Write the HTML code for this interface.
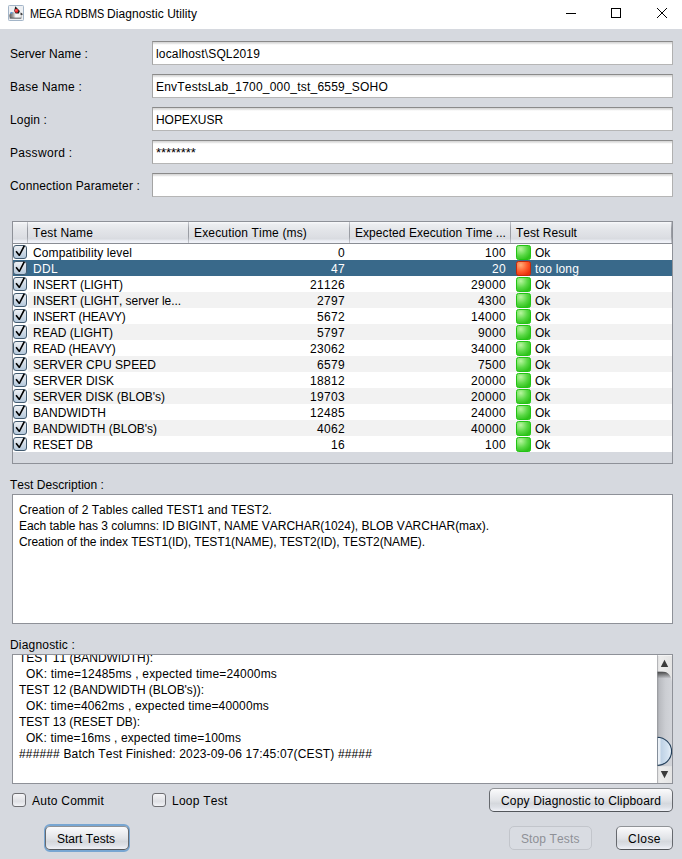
<!DOCTYPE html>
<html><head><meta charset="utf-8">
<style>
*{margin:0;padding:0;box-sizing:border-box}
html,body{width:682px;height:859px;overflow:hidden;background:#d6d9df;font-family:"Liberation Sans",sans-serif;font-size:12px;color:#000;font-kerning:none}
.a{position:absolute}
.t{position:absolute;line-height:16px;white-space:pre;height:16px}
#title{left:0;top:0;width:682px;height:29px;background:#fff}
.tf{position:absolute;left:152px;width:521px;height:24px;background:#fff;border:1px solid #a9a9a9;border-color:#8a8a8a #b0b0b0 #b6b6b6 #a4a4a4;background:linear-gradient(#d9d9d9 0px,#d9d9d9 1px,#f2f2f2 2px,#fff 3px)}
.r{text-align:right}
.hdr{background:linear-gradient(#f6f7f9 0px,#f6f7f9 1px,#eceef1 2px,#e3e5e9 8px,#dcdee3 15px,#d8dbe0 17px,#e6e8ee 18px,#f0f2f8 20px,#f0f2f8 21px)}
.hdiv{width:1px;height:21px;background:linear-gradient(#c8cad0,#9a9da4 30%,#9a9da4 70%,#c8cad0)}
</style></head><body>
<svg width="0" height="0" style="position:absolute">
 <defs>
  <linearGradient id="cbg" x1="0" y1="0" x2="0" y2="1"><stop offset="0" stop-color="#f1f3f6"/><stop offset="0.4" stop-color="#d8e0e9"/><stop offset="1" stop-color="#b2c7db"/></linearGradient>
  <radialGradient id="gg" cx="0.3" cy="0.25" r="0.8"><stop offset="0" stop-color="#b8f5a0"/><stop offset="0.6" stop-color="#5ad845"/><stop offset="1" stop-color="#2fc21c"/></radialGradient>
  <radialGradient id="rg" cx="0.3" cy="0.25" r="0.8"><stop offset="0" stop-color="#ffae7a"/><stop offset="0.6" stop-color="#ff5a2a"/><stop offset="1" stop-color="#e8300c"/></radialGradient>
  <symbol id="chk" viewBox="0 0 14 14">
   <rect x="0.5" y="0.5" width="13" height="13" rx="2.5" fill="url(#cbg)" stroke="#435b70"/>
   <path d="M2.4 6.7 L3.7 5.7 L6.2 8.9 L10.5 0.6 L12.1 1.0 L6.9 10.9 L5.8 10.9 Z" fill="#000"/>
  </symbol>
  <symbol id="grn" viewBox="0 0 15 15"><rect x="0.5" y="0.5" width="14" height="14" rx="2" fill="url(#gg)" stroke="#22c414"/></symbol>
  <symbol id="red" viewBox="0 0 15 15"><rect x="0.5" y="0.5" width="14" height="14" rx="2" fill="url(#rg)" stroke="#c42a0a"/></symbol>
 </defs>
</svg>
<div id="title" class="a">
  <svg class="a" style="left:8px;top:5px" width="16" height="16" viewBox="0 0 16 16">
    <defs><linearGradient id="dk" x1="0" x2="1" y1="0" y2="0"><stop offset="0" stop-color="#5a5a5a"/><stop offset="0.3" stop-color="#a8a8a8"/><stop offset="0.5" stop-color="#fafafa"/><stop offset="0.85" stop-color="#ececec"/><stop offset="1" stop-color="#b0b0b0"/></linearGradient></defs>
    <rect x="0.5" y="0.5" width="15" height="15" rx="0.8" fill="#eef0f3" stroke="#a3b5c8"/>
    <path d="M1.4 10 Q1.8 7.4 4.4 7.2 L11 7.2 Q13.8 7.6 14.2 10 L13.4 13 L2 13 Q1.2 12 1.4 10 Z" fill="url(#dk)"/>
    <path d="M1.6 12.4 L13.6 12.4 L13.2 14 L1.8 14 Z" fill="#4a4b4e" opacity="0.6"/>
    <ellipse cx="3.4" cy="7.8" rx="1.2" ry="0.9" fill="#5b9bd8"/>
    <path d="M12.5 7.6 Q14.8 8 14.6 10 L12.6 10 Z" fill="#262626" opacity="0.85"/>
    <path d="M7.3 1.2 L11.9 5.9 L10.8 8.6 L7.6 8.6 L6.2 5.8 Z" fill="#18201f"/>
    <circle cx="8.5" cy="5.75" r="1.9" fill="#e9282c"/>
    <circle cx="8" cy="5.2" r="0.7" fill="#ff8c8c"/>
  </svg>
  <div class="t" style="left:30px;top:6px;font-size:12px;transform:scaleX(0.905);transform-origin:0 0;letter-spacing:0px">MEGA RDBMS</div><div class="t" style="left:107px;top:6px;font-size:12px;letter-spacing:0.07px">Diagnostic Utility</div>
  <div class="a" style="left:566px;top:13px;width:10px;height:1px;background:#000"></div>
  <div class="a" style="left:611px;top:8px;width:10px;height:10px;border:1px solid #000"></div>
  <svg class="a" style="left:656px;top:7px" width="12" height="12" viewBox="0 0 12 12"><path d="M1 1 L11 11 M11 1 L1 11" stroke="#000" stroke-width="1"/></svg>
</div>

<div class="t" style="left:10px;top:46px;letter-spacing:0.050px">Server Name :</div>
<div class="t" style="left:10px;top:79px;letter-spacing:0.240px">Base Name :</div>
<div class="t" style="left:10px;top:112px;letter-spacing:0.139px">Login :</div>
<div class="t" style="left:10px;top:145px;letter-spacing:0.314px">Password :</div>
<div class="t" style="left:10px;top:178px;letter-spacing:0.149px">Connection Parameter :</div>

<div class="tf" style="top:41px"></div>
<div class="tf" style="top:74px"></div>
<div class="tf" style="top:107px"></div>
<div class="tf" style="top:140px"></div>
<div class="tf" style="top:173px"></div>
<div class="t" style="left:156px;top:46px;letter-spacing:0.153px">localhost\SQL2019</div>
<div class="t" style="left:156px;top:79px;letter-spacing:0.211px">EnvTestsLab_1700_000_tst_6559_SOHO</div>
<div class="t" style="left:156px;top:112px;letter-spacing:-0.043px">HOPEXUSR</div>
<div class="t" style="left:156px;top:145px;font-size:13px;letter-spacing:-0.1px">********</div>

<!-- TABLE -->
<div class="a" style="left:12px;top:221px;width:661px;height:243px;border:1px solid #8e9198;background:#d6d9df"></div>
<div class="a hdr" style="left:13px;top:222px;width:659px;height:21px"></div>
<div class="a" style="left:13px;top:243px;width:659px;height:1px;background:#8a8d94"></div>
<div class="a hdiv" style="left:27px;top:222px"></div>
<div class="a hdiv" style="left:188px;top:222px"></div>
<div class="a hdiv" style="left:349px;top:222px"></div>
<div class="a hdiv" style="left:510px;top:222px"></div>
<div class="a hdiv" style="left:671px;top:222px"></div>
<div class="t" style="left:33px;top:225px;letter-spacing:0.145px">Test Name</div>
<div class="t" style="left:194px;top:225px;letter-spacing:0.157px">Execution Time (ms)</div>
<div class="t" style="left:355px;top:225px;letter-spacing:0.059px">Expected Execution Time ...</div>
<div class="t" style="left:516px;top:225px;letter-spacing:0.027px">Test Result</div>
<div class="a" style="left:13px;top:244px;width:15px;height:16px;background:#fff"></div>
<div class="a" style="left:28px;top:244px;width:644px;height:16px;background:#fff"></div>
<svg class="a cb" style="left:13px;top:245px" width="14" height="14" viewBox="0 0 14 14"><rect x="0.5" y="0.5" width="13" height="13" rx="2.5" fill="url(#cbg)" stroke="#435b70"/><path d="M2.4 6.7 L3.7 5.7 L6.2 8.9 L10.5 0.6 L12.1 1.0 L6.9 10.9 L5.8 10.9 Z" fill="#000"/></svg>
<div class="t" style="left:33px;top:245px;;letter-spacing:0.121px">Compatibility level</div>
<div class="t r" style="left:189px;width:156px;top:245px;;letter-spacing:0.326px">0</div>
<div class="t r" style="left:350px;width:156px;top:245px;;letter-spacing:0.326px">100</div>
<svg class="a" style="left:516px;top:245px" width="15" height="15" viewBox="0 0 15 15"><rect x="0.5" y="0.5" width="14" height="14" rx="2" fill="url(#gg)" stroke="#22c414"/></svg>
<div class="t" style="left:535px;top:245px;;letter-spacing:-0.167px">Ok</div>
<div class="a" style="left:13px;top:260px;width:659px;height:16px;background:#39698a"></div>
<svg class="a cb" style="left:13px;top:261px" width="14" height="14" viewBox="0 0 14 14"><rect x="0.5" y="0.5" width="13" height="13" rx="2.5" fill="url(#cbg)" stroke="#435b70"/><path d="M2.4 6.7 L3.7 5.7 L6.2 8.9 L10.5 0.6 L12.1 1.0 L6.9 10.9 L5.8 10.9 Z" fill="#000"/></svg>
<div class="t" style="left:33px;top:261px;color:#fff;;letter-spacing:0.331px">DDL</div>
<div class="t r" style="left:189px;width:156px;top:261px;color:#fff;;letter-spacing:0.326px">47</div>
<div class="t r" style="left:350px;width:156px;top:261px;color:#fff;;letter-spacing:0.326px">20</div>
<svg class="a" style="left:516px;top:261px" width="15" height="15" viewBox="0 0 15 15"><rect x="0.5" y="0.5" width="14" height="14" rx="2" fill="url(#rg)" stroke="#c42a0a"/></svg>
<div class="t" style="left:535px;top:261px;color:#fff;;letter-spacing:0.162px">too long</div>
<div class="a" style="left:13px;top:276px;width:15px;height:16px;background:#fff"></div>
<div class="a" style="left:28px;top:276px;width:644px;height:16px;background:#fff"></div>
<svg class="a cb" style="left:13px;top:277px" width="14" height="14" viewBox="0 0 14 14"><rect x="0.5" y="0.5" width="13" height="13" rx="2.5" fill="url(#cbg)" stroke="#435b70"/><path d="M2.4 6.7 L3.7 5.7 L6.2 8.9 L10.5 0.6 L12.1 1.0 L6.9 10.9 L5.8 10.9 Z" fill="#000"/></svg>
<div class="t" style="left:33px;top:277px;;letter-spacing:-0.048px">INSERT (LIGHT)</div>
<div class="t r" style="left:189px;width:156px;top:277px;;letter-spacing:0.326px">21126</div>
<div class="t r" style="left:350px;width:156px;top:277px;;letter-spacing:0.326px">29000</div>
<svg class="a" style="left:516px;top:277px" width="15" height="15" viewBox="0 0 15 15"><rect x="0.5" y="0.5" width="14" height="14" rx="2" fill="url(#gg)" stroke="#22c414"/></svg>
<div class="t" style="left:535px;top:277px;;letter-spacing:-0.167px">Ok</div>
<div class="a" style="left:13px;top:292px;width:15px;height:16px;background:#fff"></div>
<div class="a" style="left:28px;top:292px;width:644px;height:16px;background:#f2f2f2"></div>
<svg class="a cb" style="left:13px;top:293px" width="14" height="14" viewBox="0 0 14 14"><rect x="0.5" y="0.5" width="13" height="13" rx="2.5" fill="url(#cbg)" stroke="#435b70"/><path d="M2.4 6.7 L3.7 5.7 L6.2 8.9 L10.5 0.6 L12.1 1.0 L6.9 10.9 L5.8 10.9 Z" fill="#000"/></svg>
<div class="t" style="left:33px;top:293px;;letter-spacing:-0.051px">INSERT (LIGHT, server le...</div>
<div class="t r" style="left:189px;width:156px;top:293px;;letter-spacing:0.326px">2797</div>
<div class="t r" style="left:350px;width:156px;top:293px;;letter-spacing:0.326px">4300</div>
<svg class="a" style="left:516px;top:293px" width="15" height="15" viewBox="0 0 15 15"><rect x="0.5" y="0.5" width="14" height="14" rx="2" fill="url(#gg)" stroke="#22c414"/></svg>
<div class="t" style="left:535px;top:293px;;letter-spacing:-0.167px">Ok</div>
<div class="a" style="left:13px;top:308px;width:15px;height:16px;background:#fff"></div>
<div class="a" style="left:28px;top:308px;width:644px;height:16px;background:#fff"></div>
<svg class="a cb" style="left:13px;top:309px" width="14" height="14" viewBox="0 0 14 14"><rect x="0.5" y="0.5" width="13" height="13" rx="2.5" fill="url(#cbg)" stroke="#435b70"/><path d="M2.4 6.7 L3.7 5.7 L6.2 8.9 L10.5 0.6 L12.1 1.0 L6.9 10.9 L5.8 10.9 Z" fill="#000"/></svg>
<div class="t" style="left:33px;top:309px;;letter-spacing:-0.251px">INSERT (HEAVY)</div>
<div class="t r" style="left:189px;width:156px;top:309px;;letter-spacing:0.326px">5672</div>
<div class="t r" style="left:350px;width:156px;top:309px;;letter-spacing:0.326px">14000</div>
<svg class="a" style="left:516px;top:309px" width="15" height="15" viewBox="0 0 15 15"><rect x="0.5" y="0.5" width="14" height="14" rx="2" fill="url(#gg)" stroke="#22c414"/></svg>
<div class="t" style="left:535px;top:309px;;letter-spacing:-0.167px">Ok</div>
<div class="a" style="left:13px;top:324px;width:15px;height:16px;background:#fff"></div>
<div class="a" style="left:28px;top:324px;width:644px;height:16px;background:#f2f2f2"></div>
<svg class="a cb" style="left:13px;top:325px" width="14" height="14" viewBox="0 0 14 14"><rect x="0.5" y="0.5" width="13" height="13" rx="2.5" fill="url(#cbg)" stroke="#435b70"/><path d="M2.4 6.7 L3.7 5.7 L6.2 8.9 L10.5 0.6 L12.1 1.0 L6.9 10.9 L5.8 10.9 Z" fill="#000"/></svg>
<div class="t" style="left:33px;top:325px;;letter-spacing:-0.000px">READ (LIGHT)</div>
<div class="t r" style="left:189px;width:156px;top:325px;;letter-spacing:0.326px">5797</div>
<div class="t r" style="left:350px;width:156px;top:325px;;letter-spacing:0.326px">9000</div>
<svg class="a" style="left:516px;top:325px" width="15" height="15" viewBox="0 0 15 15"><rect x="0.5" y="0.5" width="14" height="14" rx="2" fill="url(#gg)" stroke="#22c414"/></svg>
<div class="t" style="left:535px;top:325px;;letter-spacing:-0.167px">Ok</div>
<div class="a" style="left:13px;top:340px;width:15px;height:16px;background:#fff"></div>
<div class="a" style="left:28px;top:340px;width:644px;height:16px;background:#fff"></div>
<svg class="a cb" style="left:13px;top:341px" width="14" height="14" viewBox="0 0 14 14"><rect x="0.5" y="0.5" width="13" height="13" rx="2.5" fill="url(#cbg)" stroke="#435b70"/><path d="M2.4 6.7 L3.7 5.7 L6.2 8.9 L10.5 0.6 L12.1 1.0 L6.9 10.9 L5.8 10.9 Z" fill="#000"/></svg>
<div class="t" style="left:33px;top:341px;;letter-spacing:-0.237px">READ (HEAVY)</div>
<div class="t r" style="left:189px;width:156px;top:341px;;letter-spacing:0.326px">23062</div>
<div class="t r" style="left:350px;width:156px;top:341px;;letter-spacing:0.326px">34000</div>
<svg class="a" style="left:516px;top:341px" width="15" height="15" viewBox="0 0 15 15"><rect x="0.5" y="0.5" width="14" height="14" rx="2" fill="url(#gg)" stroke="#22c414"/></svg>
<div class="t" style="left:535px;top:341px;;letter-spacing:-0.167px">Ok</div>
<div class="a" style="left:13px;top:356px;width:15px;height:16px;background:#fff"></div>
<div class="a" style="left:28px;top:356px;width:644px;height:16px;background:#f2f2f2"></div>
<svg class="a cb" style="left:13px;top:357px" width="14" height="14" viewBox="0 0 14 14"><rect x="0.5" y="0.5" width="13" height="13" rx="2.5" fill="url(#cbg)" stroke="#435b70"/><path d="M2.4 6.7 L3.7 5.7 L6.2 8.9 L10.5 0.6 L12.1 1.0 L6.9 10.9 L5.8 10.9 Z" fill="#000"/></svg>
<div class="t" style="left:33px;top:357px;;letter-spacing:0.060px">SERVER CPU SPEED</div>
<div class="t r" style="left:189px;width:156px;top:357px;;letter-spacing:0.326px">6579</div>
<div class="t r" style="left:350px;width:156px;top:357px;;letter-spacing:0.326px">7500</div>
<svg class="a" style="left:516px;top:357px" width="15" height="15" viewBox="0 0 15 15"><rect x="0.5" y="0.5" width="14" height="14" rx="2" fill="url(#gg)" stroke="#22c414"/></svg>
<div class="t" style="left:535px;top:357px;;letter-spacing:-0.167px">Ok</div>
<div class="a" style="left:13px;top:372px;width:15px;height:16px;background:#fff"></div>
<div class="a" style="left:28px;top:372px;width:644px;height:16px;background:#fff"></div>
<svg class="a cb" style="left:13px;top:373px" width="14" height="14" viewBox="0 0 14 14"><rect x="0.5" y="0.5" width="13" height="13" rx="2.5" fill="url(#cbg)" stroke="#435b70"/><path d="M2.4 6.7 L3.7 5.7 L6.2 8.9 L10.5 0.6 L12.1 1.0 L6.9 10.9 L5.8 10.9 Z" fill="#000"/></svg>
<div class="t" style="left:33px;top:373px;;letter-spacing:0.028px">SERVER DISK</div>
<div class="t r" style="left:189px;width:156px;top:373px;;letter-spacing:0.326px">18812</div>
<div class="t r" style="left:350px;width:156px;top:373px;;letter-spacing:0.326px">20000</div>
<svg class="a" style="left:516px;top:373px" width="15" height="15" viewBox="0 0 15 15"><rect x="0.5" y="0.5" width="14" height="14" rx="2" fill="url(#gg)" stroke="#22c414"/></svg>
<div class="t" style="left:535px;top:373px;;letter-spacing:-0.167px">Ok</div>
<div class="a" style="left:13px;top:388px;width:15px;height:16px;background:#fff"></div>
<div class="a" style="left:28px;top:388px;width:644px;height:16px;background:#f2f2f2"></div>
<svg class="a cb" style="left:13px;top:389px" width="14" height="14" viewBox="0 0 14 14"><rect x="0.5" y="0.5" width="13" height="13" rx="2.5" fill="url(#cbg)" stroke="#435b70"/><path d="M2.4 6.7 L3.7 5.7 L6.2 8.9 L10.5 0.6 L12.1 1.0 L6.9 10.9 L5.8 10.9 Z" fill="#000"/></svg>
<div class="t" style="left:33px;top:389px;;letter-spacing:-0.016px">SERVER DISK (BLOB's)</div>
<div class="t r" style="left:189px;width:156px;top:389px;;letter-spacing:0.326px">19703</div>
<div class="t r" style="left:350px;width:156px;top:389px;;letter-spacing:0.326px">20000</div>
<svg class="a" style="left:516px;top:389px" width="15" height="15" viewBox="0 0 15 15"><rect x="0.5" y="0.5" width="14" height="14" rx="2" fill="url(#gg)" stroke="#22c414"/></svg>
<div class="t" style="left:535px;top:389px;;letter-spacing:-0.167px">Ok</div>
<div class="a" style="left:13px;top:404px;width:15px;height:16px;background:#fff"></div>
<div class="a" style="left:28px;top:404px;width:644px;height:16px;background:#fff"></div>
<svg class="a cb" style="left:13px;top:405px" width="14" height="14" viewBox="0 0 14 14"><rect x="0.5" y="0.5" width="13" height="13" rx="2.5" fill="url(#cbg)" stroke="#435b70"/><path d="M2.4 6.7 L3.7 5.7 L6.2 8.9 L10.5 0.6 L12.1 1.0 L6.9 10.9 L5.8 10.9 Z" fill="#000"/></svg>
<div class="t" style="left:33px;top:405px;;letter-spacing:0.038px">BANDWIDTH</div>
<div class="t r" style="left:189px;width:156px;top:405px;;letter-spacing:0.326px">12485</div>
<div class="t r" style="left:350px;width:156px;top:405px;;letter-spacing:0.326px">24000</div>
<svg class="a" style="left:516px;top:405px" width="15" height="15" viewBox="0 0 15 15"><rect x="0.5" y="0.5" width="14" height="14" rx="2" fill="url(#gg)" stroke="#22c414"/></svg>
<div class="t" style="left:535px;top:405px;;letter-spacing:-0.167px">Ok</div>
<div class="a" style="left:13px;top:420px;width:15px;height:16px;background:#fff"></div>
<div class="a" style="left:28px;top:420px;width:644px;height:16px;background:#f2f2f2"></div>
<svg class="a cb" style="left:13px;top:421px" width="14" height="14" viewBox="0 0 14 14"><rect x="0.5" y="0.5" width="13" height="13" rx="2.5" fill="url(#cbg)" stroke="#435b70"/><path d="M2.4 6.7 L3.7 5.7 L6.2 8.9 L10.5 0.6 L12.1 1.0 L6.9 10.9 L5.8 10.9 Z" fill="#000"/></svg>
<div class="t" style="left:33px;top:421px;;letter-spacing:-0.016px">BANDWIDTH (BLOB's)</div>
<div class="t r" style="left:189px;width:156px;top:421px;;letter-spacing:0.326px">4062</div>
<div class="t r" style="left:350px;width:156px;top:421px;;letter-spacing:0.326px">40000</div>
<svg class="a" style="left:516px;top:421px" width="15" height="15" viewBox="0 0 15 15"><rect x="0.5" y="0.5" width="14" height="14" rx="2" fill="url(#gg)" stroke="#22c414"/></svg>
<div class="t" style="left:535px;top:421px;;letter-spacing:-0.167px">Ok</div>
<div class="a" style="left:13px;top:436px;width:15px;height:16px;background:#fff"></div>
<div class="a" style="left:28px;top:436px;width:644px;height:16px;background:#fff"></div>
<svg class="a cb" style="left:13px;top:437px" width="14" height="14" viewBox="0 0 14 14"><rect x="0.5" y="0.5" width="13" height="13" rx="2.5" fill="url(#cbg)" stroke="#435b70"/><path d="M2.4 6.7 L3.7 5.7 L6.2 8.9 L10.5 0.6 L12.1 1.0 L6.9 10.9 L5.8 10.9 Z" fill="#000"/></svg>
<div class="t" style="left:33px;top:437px;;letter-spacing:-0.001px">RESET DB</div>
<div class="t r" style="left:189px;width:156px;top:437px;;letter-spacing:0.326px">16</div>
<div class="t r" style="left:350px;width:156px;top:437px;;letter-spacing:0.326px">100</div>
<svg class="a" style="left:516px;top:437px" width="15" height="15" viewBox="0 0 15 15"><rect x="0.5" y="0.5" width="14" height="14" rx="2" fill="url(#gg)" stroke="#22c414"/></svg>
<div class="t" style="left:535px;top:437px;;letter-spacing:-0.167px">Ok</div>

<!-- DESCRIPTION -->
<div class="t" style="left:10px;top:477px;letter-spacing:0.035px">Test Description :</div>
<div class="a" style="left:12px;top:494px;width:661px;height:130px;background:#fff;border:1px solid #8e9198"></div>
<div class="t" style="left:19px;top:502px;letter-spacing:0.050px">Creation of 2 Tables called TEST1 and TEST2.</div>
<div class="t" style="left:19px;top:518px;letter-spacing:-0.029px">Each table has 3 columns: ID BIGINT, NAME VARCHAR(1024), BLOB VARCHAR(max).</div>
<div class="t" style="left:19px;top:534px;letter-spacing:-0.088px">Creation of the index TEST1(ID), TEST1(NAME), TEST2(ID), TEST2(NAME).</div>

<!-- DIAGNOSTIC -->
<div class="t" style="left:10px;top:637px;letter-spacing:0.192px">Diagnostic :</div>
<div class="a" style="left:12px;top:654px;width:661px;height:130px;background:#fff;border:1px solid #8e9198;overflow:hidden">
  <div class="t" style="left:6px;top:-5px;letter-spacing:-0.034px">TEST 11 (BANDWIDTH):</div>
  <div class="t" style="left:6px;top:11px;letter-spacing:0.171px">  OK: time=12485ms , expected time=24000ms</div>
  <div class="t" style="left:6px;top:27px;letter-spacing:-0.045px">TEST 12 (BANDWIDTH (BLOB's)):</div>
  <div class="t" style="left:6px;top:43px;letter-spacing:0.143px">  OK: time=4062ms , expected time=40000ms</div>
  <div class="t" style="left:6px;top:59px;letter-spacing:-0.054px">TEST 13 (RESET DB):</div>
  <div class="t" style="left:6px;top:75px;letter-spacing:0.124px">  OK: time=16ms , expected time=100ms</div>
  <div class="t" style="left:6px;top:91px;letter-spacing:0.149px">###### Batch Test Finished: 2023-09-06 17:45:07(CEST) #####</div>
</div>


<svg class="a" style="left:657px;top:655px" width="15" height="128" viewBox="0 0 15 128">
 <defs>
  <linearGradient id="trk" x1="0" x2="1" y1="0" y2="0"><stop offset="0" stop-color="#9a9b9f"/><stop offset="0.15" stop-color="#b9bbc0"/><stop offset="0.55" stop-color="#cbcdd2"/><stop offset="1" stop-color="#d3d5da"/></linearGradient>
  <linearGradient id="shd" x1="0" y1="0" x2="0" y2="1"><stop offset="0" stop-color="#2e2e2e" stop-opacity="0.85"/><stop offset="1" stop-color="#2e2e2e" stop-opacity="0"/></linearGradient>
  <linearGradient id="btn" x1="0" x2="1" y1="0" y2="0"><stop offset="0" stop-color="#d8d8d8"/><stop offset="0.2" stop-color="#ededed"/><stop offset="1" stop-color="#e4e4e4"/></linearGradient>
  <linearGradient id="thm" x1="0" x2="1" y1="0" y2="0"><stop offset="0" stop-color="#a7bdd2"/><stop offset="0.12" stop-color="#f6f9fc"/><stop offset="0.3" stop-color="#bfd2e5"/><stop offset="0.75" stop-color="#d4e3f1"/><stop offset="1" stop-color="#eaf2f9"/></linearGradient>
 </defs>
 <rect width="15" height="128" fill="url(#trk)"/>
 <rect x="0" y="16.5" width="15" height="7" fill="url(#shd)"/>
 <path d="M0 0 H15 V27 C14.2 21 11.5 16.8 5 16.6 H0 Z" fill="url(#btn)"/>
 <rect x="0" y="0" width="15" height="1" fill="#f4f4f4"/>
 <path d="M3.8 12 L7.5 4.8 L11.2 12 Z" fill="#3b3b3b"/>
 <path d="M0 82.2 A14.6 14.15 0 0 1 0 110.5 Z" fill="url(#thm)" stroke="#24405b" stroke-width="1.15"/>
 <rect x="0" y="111.2" width="15" height="17" fill="url(#btn)"/>
 <path d="M3.8 116 L11.2 116 L7.5 123.2 Z" fill="#3b3b3b"/>
 <rect x="0" y="0" width="1" height="128" fill="#9a9ba0" opacity="0.6"/>
</svg>

<!-- BOTTOM -->
<div class="a" style="left:12px;top:793px;width:14px;height:14px;border:1px solid #6e6e72;border-radius:3px;background:linear-gradient(#f6f6f8,#dfe0e4 60%,#f2f3f6)"></div>
<div class="t" style="left:32px;top:793px;letter-spacing:0.241px">Auto Commit</div>
<div class="a" style="left:152px;top:793px;width:14px;height:14px;border:1px solid #6e6e72;border-radius:3px;background:linear-gradient(#f6f6f8,#dfe0e4 60%,#f2f3f6)"></div>
<div class="t" style="left:172px;top:793px;letter-spacing:0.237px">Loop Test</div>

<div class="a" style="left:489px;top:788px;width:184px;height:24px;border:1px solid #6a6d72;border-color:#909397 #66696e #53565b #66696e;border-radius:5px;background:linear-gradient(#fbfbfc 0%,#eeeff2 25%,#e2e4e8 50%,#d5d8dd 66%,#dde0e6 82%,#f0f2f7 100%)"></div>
<div class="t" style="left:501px;top:793px;letter-spacing:0.164px">Copy Diagnostic to Clipboard</div>

<div class="a" style="left:44px;top:824px;width:86px;height:28px;border:2px solid #78a6d2;border-radius:6px"></div>
<div class="a" style="left:45px;top:826px;width:84px;height:24px;border:1px solid #6a6d72;border-color:#909397 #66696e #53565b #66696e;border-radius:5px;background:linear-gradient(#fbfbfc 0%,#eeeff2 25%,#e2e4e8 50%,#d5d8dd 66%,#dde0e6 82%,#f0f2f7 100%)"></div>
<div class="t" style="left:57px;top:831px;letter-spacing:-0.001px">Start Tests</div>

<div class="a" style="left:509px;top:826px;width:83px;height:24px;border:1px solid #c2c5cb;border-radius:5px;background:#d9dce2"></div>
<div class="t" style="left:521px;top:831px;color:#8e9096;letter-spacing:0.114px">Stop Tests</div>

<div class="a" style="left:616px;top:826px;width:57px;height:24px;border:1px solid #6a6d72;border-color:#909397 #66696e #53565b #66696e;border-radius:5px;background:linear-gradient(#fbfbfc 0%,#eeeff2 25%,#e2e4e8 50%,#d5d8dd 66%,#dde0e6 82%,#f0f2f7 100%)"></div>
<div class="t" style="left:628px;top:831px;letter-spacing:0.464px">Close</div>
</body></html>
